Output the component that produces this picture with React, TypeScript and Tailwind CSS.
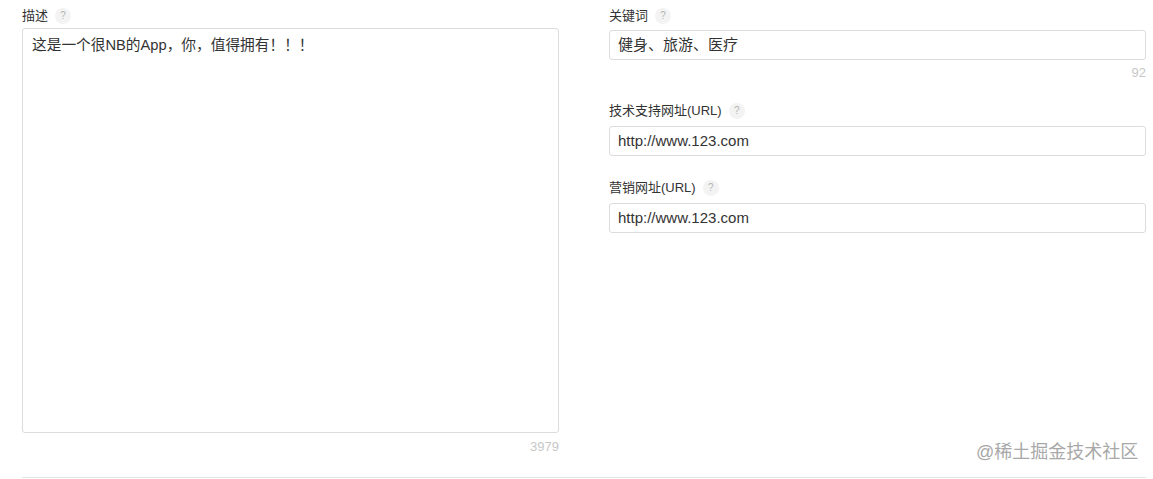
const Help = () => (
  <span className="ml-[7px] inline-flex h-[16px] w-[16px] items-center justify-center rounded-full bg-[#f3f3f3] text-[10px] leading-none text-[#b5b5b5]">
    ?
  </span>
);

const Label = ({ text }: { text: string }) => (
  <div className="flex h-[16px] items-center text-[13px] leading-[16px] text-[#333]">
    {text}
    <Help />
  </div>
);

const Input = ({ value }: { value: string }) => (
  <div className="flex h-[30px] items-center rounded-[3px] border border-[#dcdcdc] px-[8px] text-[15px] text-[#333]">
    {value}
  </div>
);

const App = () => {
  return (
    <div
      className="relative h-[479px] w-[1153px] bg-white pl-[22px] pr-[7px] pt-[8px]"
      style={{ fontFamily: '"Liberation Sans", "Noto Sans CJK SC", sans-serif' }}
    >
      <div className="grid grid-cols-2 gap-x-[50px]">
        <div>
          <Label text="描述" />
          <div className="mt-[4px] h-[405px] rounded-[3px] border border-[#dcdcdc] px-[9px] pt-[6px] text-[14.7px] leading-[20px] text-[#333]">
            这是一个很NB的App，你，值得拥有！！！
          </div>
          <div className="mt-[7px] text-right text-[13px] leading-[14px] text-[#c8c8c8]">3979</div>
        </div>
        <div>
          <Label text="关键词" />
          <div className="mt-[6px]">
            <Input value="健身、旅游、医疗" />
          </div>
          <div className="mt-[6px] text-right text-[13px] leading-[14px] text-[#c8c8c8]">92</div>
          <div className="mt-[23px]">
            <Label text="技术支持网址(URL)" />
          </div>
          <div className="mt-[7px]">
            <Input value="http://www.123.com" />
          </div>
          <div className="mt-[24px]">
            <Label text="营销网址(URL)" />
          </div>
          <div className="mt-[7px]">
            <Input value="http://www.123.com" />
          </div>
        </div>
      </div>
      <div className="mt-[23px] h-px bg-[#e5e5e5]" />
      <div className="absolute left-[976px] top-[441px] text-[18px] leading-[22px] text-[#a8a8a8]">
        @稀土掘金技术社区
      </div>
    </div>
  );
};

export default App;
